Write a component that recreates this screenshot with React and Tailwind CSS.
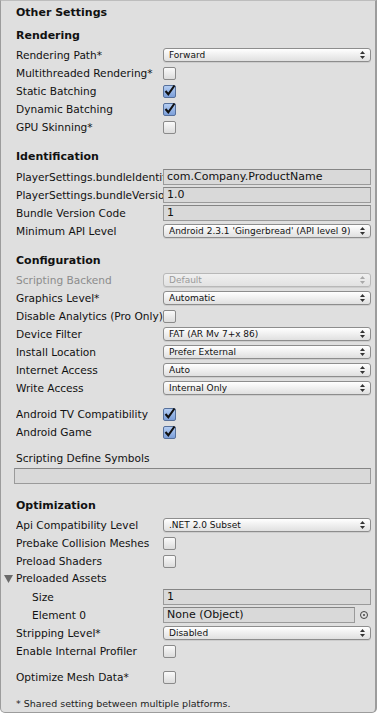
import React from "react"

const font = { fontFamily: '"DejaVu Sans", "Liberation Sans", sans-serif' }

const Arrows = ({ dim }) => (
  <svg width="5" height="8" viewBox="0 0 5 8" className="shrink-0">
    <path d="M2.5 0 L5 3 L0 3 Z" fill={dim ? "#a8a8a8" : "#333"} />
    <path d="M0 5 L5 5 L2.5 8 Z" fill={dim ? "#a8a8a8" : "#333"} />
  </svg>
)

const Dropdown = ({ value, disabled }) => (
  <div
    className={`flex-1 h-[14px] rounded-[3px] border flex items-center justify-between pl-[5px] pr-[5px] text-[9px] leading-[12px] shadow-[0_1px_0_rgba(0,0,0,0.08)] ${
      disabled
        ? "border-[#b8b8b8] bg-gradient-to-b from-[#f0f0f0] to-[#e2e2e2] text-[#9a9a9a]"
        : "border-[#8d8d8d] bg-gradient-to-b from-white to-[#e0e0e0] text-[#111]"
    }`}
  >
    <span className="truncate">{value}</span>
    <Arrows dim={disabled} />
  </div>
)

const TextField = ({ value, className = "flex-1" }) => (
  <div
    className={`${className} h-[16px] border border-[#9a9a9a] border-t-[#858585] bg-[#d9d9d9] flex items-center pl-[3px] text-[11px] leading-[14px] text-[#111] whitespace-nowrap overflow-hidden`}
  >
    {value}
  </div>
)

const Checkbox = ({ checked }) =>
  checked ? (
    <div className="relative w-[13px] h-[13px] rounded-[2px] border border-[#56709b] bg-gradient-to-b from-[#b4cdf2] to-[#7c9fd9]">
      <svg width="13" height="13" viewBox="0 0 13 13" className="absolute left-[-1px] top-[-2px]">
        <path d="M2.5 7 L5.3 10.3 L11.5 1.5" fill="none" stroke="#111" strokeWidth="2.1" />
      </svg>
    </div>
  ) : (
    <div className="w-[13px] h-[13px] rounded-[2px] border border-[#8a8a8a] bg-gradient-to-b from-[#fafafa] to-[#dcdcdc]" />
  )

const Heading = ({ children, className = "" }) => (
  <div className={`h-[20px] flex items-center pl-[15px] text-[11px] font-bold text-[#111] ${className}`}>
    {children}
  </div>
)

const Row = ({ label, disabled, indent, children, className = "" }) => (
  <div className={`h-[18px] flex items-center pl-[15px] pr-[4px] ${className}`}>
    <div
      className={`w-[147px] shrink-0 overflow-hidden whitespace-nowrap text-[10.6px] leading-[15px] ${
        indent ? "pl-[16px]" : ""
      } ${disabled ? "text-[#8c8c8c]" : "text-[#111]"}`}
    >
      {label}
    </div>
    <div className="flex-1 flex items-center">{children}</div>
  </div>
)

export default function App() {
  return (
    <div style={font} className="w-[377px] h-[713px] bg-[#dfdfdf] border border-[#9c9c9c] border-t-[#bdbdbd] border-r-2 rounded-b-[5px] overflow-hidden">
      <div className="h-[20px] mt-[2px] flex items-center pl-[15px] text-[11px] font-bold text-[#111]">Other Settings</div>

      <Heading className="mt-[3px]">Rendering</Heading>
      <Row label="Rendering Path*"><Dropdown value="Forward" /></Row>
      <Row label="Multithreaded Rendering*"><Checkbox /></Row>
      <Row label="Static Batching"><Checkbox checked /></Row>
      <Row label="Dynamic Batching"><Checkbox checked /></Row>
      <Row label="GPU Skinning*"><Checkbox /></Row>

      <Heading className="mt-[11px]">Identification</Heading>
      <div className="h-[1px]" />
      <Row label="PlayerSettings.bundleIdentifier"><TextField value="com.Company.ProductName" /></Row>
      <Row label="PlayerSettings.bundleVersion"><TextField value="1.0" /></Row>
      <Row label="Bundle Version Code"><TextField value="1" /></Row>
      <Row label="Minimum API Level"><Dropdown value="Android 2.3.1 'Gingerbread' (API level 9)" /></Row>

      <Heading className="mt-[11px]">Configuration</Heading>
      <Row label="Scripting Backend" disabled><Dropdown value="Default" disabled /></Row>
      <Row label="Graphics Level*"><Dropdown value="Automatic" /></Row>
      <Row label="Disable Analytics (Pro Only)"><Checkbox /></Row>
      <Row label="Device Filter"><Dropdown value="FAT (AR Mv 7+x 86)" /></Row>
      <Row label="Install Location"><Dropdown value="Prefer External" /></Row>
      <Row label="Internet Access"><Dropdown value="Auto" /></Row>
      <Row label="Write Access"><Dropdown value="Internal Only" /></Row>

      <Row label="Android TV Compatibility" className="mt-[8px]"><Checkbox checked /></Row>
      <Row label="Android Game"><Checkbox checked /></Row>

      <Row label="Scripting Define Symbols" className="mt-[8px]" />
      <div className="pl-[13px] pr-[4px] mt-[1px]">
        <TextField value="" className="w-full" />
      </div>

      <Heading className="mt-[12px]">Optimization</Heading>
      <Row label="Api Compatibility Level"><Dropdown value=".NET 2.0 Subset" /></Row>
      <Row label="Prebake Collision Meshes"><Checkbox /></Row>
      <Row label="Preload Shaders"><Checkbox /></Row>
      <div className="h-[18px] flex items-center pl-[3px] text-[10.6px] text-[#111]">
        <svg width="9" height="8" viewBox="0 0 9 8" className="mr-[3px]">
          <path d="M0 0 L9 0 L4.5 8 Z" fill="#6a6a6a" />
        </svg>
        Preloaded Assets
      </div>
      <Row label="Size" indent><TextField value="1" /></Row>
      <Row label="Element 0" indent>
        <TextField value="None (Object)" className="w-[192px]" />
        <div className="flex-1 flex justify-center pl-[2px]">
          <div className="w-[8px] h-[8px] rounded-full border border-[#444] flex items-center justify-center">
            <div className="w-[2px] h-[2px] rounded-full bg-[#444]" />
          </div>
        </div>
      </Row>
      <Row label="Stripping Level*"><Dropdown value="Disabled" /></Row>
      <Row label="Enable Internal Profiler"><Checkbox /></Row>

      <Row label="Optimize Mesh Data*" className="mt-[8px]"><Checkbox /></Row>

      <div className="h-[18px] mt-[9px] flex items-center pl-[15px] text-[9.5px] text-[#222]">
        * Shared setting between multiple platforms.
      </div>
    </div>
  )
}
